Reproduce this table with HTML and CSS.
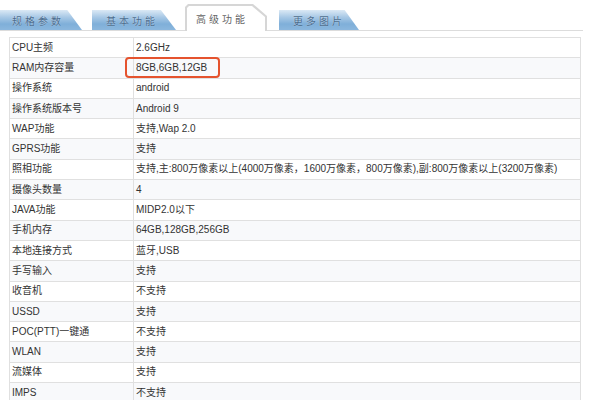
FILE: index.html
```html
<!DOCTYPE html>
<html>
<head>
<meta charset="utf-8">
<link rel="stylesheet" href="styles.css">
</head>
<body>
<div class="tabs">
  <div class="tab tab-blue t1"><span>规格参数</span></div>
  <div class="tab tab-blue t2"><span>基本功能</span></div>
  <div class="tab-active"><div class="tab-active-inner"><span>高级功能</span></div></div>
  <div class="tab tab-blue t4"><span>更多图片</span></div>
</div>
<div class="panel">
  <table class="spec">
    <tr><td class="k">CPU主频</td><td>2.6GHz</td></tr>
    <tr class="alt"><td class="k">RAM内存容量</td><td class="hl-cell">8GB,6GB,12GB<span class="hl"></span></td></tr>
    <tr><td class="k">操作系统</td><td>android</td></tr>
    <tr class="alt"><td class="k">操作系统版本号</td><td>Android 9</td></tr>
    <tr><td class="k">WAP功能</td><td>支持,Wap 2.0</td></tr>
    <tr class="alt"><td class="k">GPRS功能</td><td>支持</td></tr>
    <tr><td class="k">照相功能</td><td>支持,主:800万像素以上(4000万像素，1600万像素，800万像素),副:800万像素以上(3200万像素)</td></tr>
    <tr class="alt"><td class="k">摄像头数量</td><td>4</td></tr>
    <tr><td class="k">JAVA功能</td><td>MIDP2.0以下</td></tr>
    <tr class="alt"><td class="k">手机内存</td><td>64GB,128GB,256GB</td></tr>
    <tr><td class="k">本地连接方式</td><td>蓝牙,USB</td></tr>
    <tr class="alt"><td class="k">手写输入</td><td>支持</td></tr>
    <tr><td class="k">收音机</td><td>不支持</td></tr>
    <tr class="alt"><td class="k">USSD</td><td>支持</td></tr>
    <tr><td class="k">POC(PTT)一键通</td><td>不支持</td></tr>
    <tr class="alt"><td class="k">WLAN</td><td>支持</td></tr>
    <tr><td class="k">流媒体</td><td>支持</td></tr>
    <tr class="alt"><td class="k">IMPS</td><td>不支持</td></tr>
  </table>
</div>
</body>
</html>
```
FILE: styles.css
```css
html, body {
  margin: 0;
  padding: 0;
  background: #fff;
  overflow: hidden;
}
body {
  font-family: "Liberation Sans", "Noto Sans CJK SC", sans-serif;
  font-size: 10px;
  color: #333;
  width: 600px;
  height: 400px;
}
.tabs {
  display: flex;
  align-items: flex-end;
  height: 30px;
  width: 583px;
  border-bottom: 1px solid #dcdcdc;
}
.tab {
  height: 20px;
  display: flex;
  align-items: center;
  font-size: 10px;
  letter-spacing: 3px;
  color: #4b6c8e;
  text-shadow: 0 0 1px rgba(255,255,255,0.6);
}
.tab-blue {
  background: linear-gradient(#dbe9f5 0%, #a9c9e6 35%, #7fafd9 70%, #8bb7de 100%);
  clip-path: polygon(0 0, 82% 0, 100% 100%, 0 100%);
}
.t1 { width: 82px; margin-right: 10px; padding-left: 12px; box-sizing: border-box; }
.t2 { width: 84px; margin-right: 9px; padding-left: 14px; box-sizing: border-box; }
.t4 { width: 80px; margin-left: 12px; padding-left: 14px; box-sizing: border-box; }
.tab-active {
  width: 82px;
  height: 27px;
  background: #d6d6d6;
  clip-path: polygon(0 3px, 3px 0, 68px 0, 82px 12px, 82px 100%, 0 100%);
  margin-bottom: -1px;
}
.tab-active-inner {
  margin: 2px 2px 0 2px;
  height: 25px;
  background: #fff;
  clip-path: polygon(0 2px, 2px 0, 65px 0, 78px 11px, 78px 100%, 0 100%);
  display: flex;
  align-items: center;
  padding-left: 9px;
  box-sizing: border-box;
  font-size: 10px;
  letter-spacing: 3px;
  color: #666;
}
.panel {
  padding: 6px 0 0 9px;
}
.spec {
  width: 572px;
  border-collapse: collapse;
  table-layout: fixed;
}
.spec td {
  border: 1px solid #e0e0e0;
  height: 19.3px;
  padding: 0 0 0 2px;
  white-space: nowrap;
  overflow: visible;
  vertical-align: middle;
  line-height: 14px;
}
.spec td.k {
  width: 121px;
}
.spec tr.alt td {
  background: #f8f9fb;
}
.hl-cell {
  position: relative;
}
.hl {
  position: absolute;
  left: -9px;
  top: -1px;
  width: 95px;
  height: 21px;
  border: 2px solid #e5532e;
  border-radius: 4px;
  box-sizing: border-box;
}
```
